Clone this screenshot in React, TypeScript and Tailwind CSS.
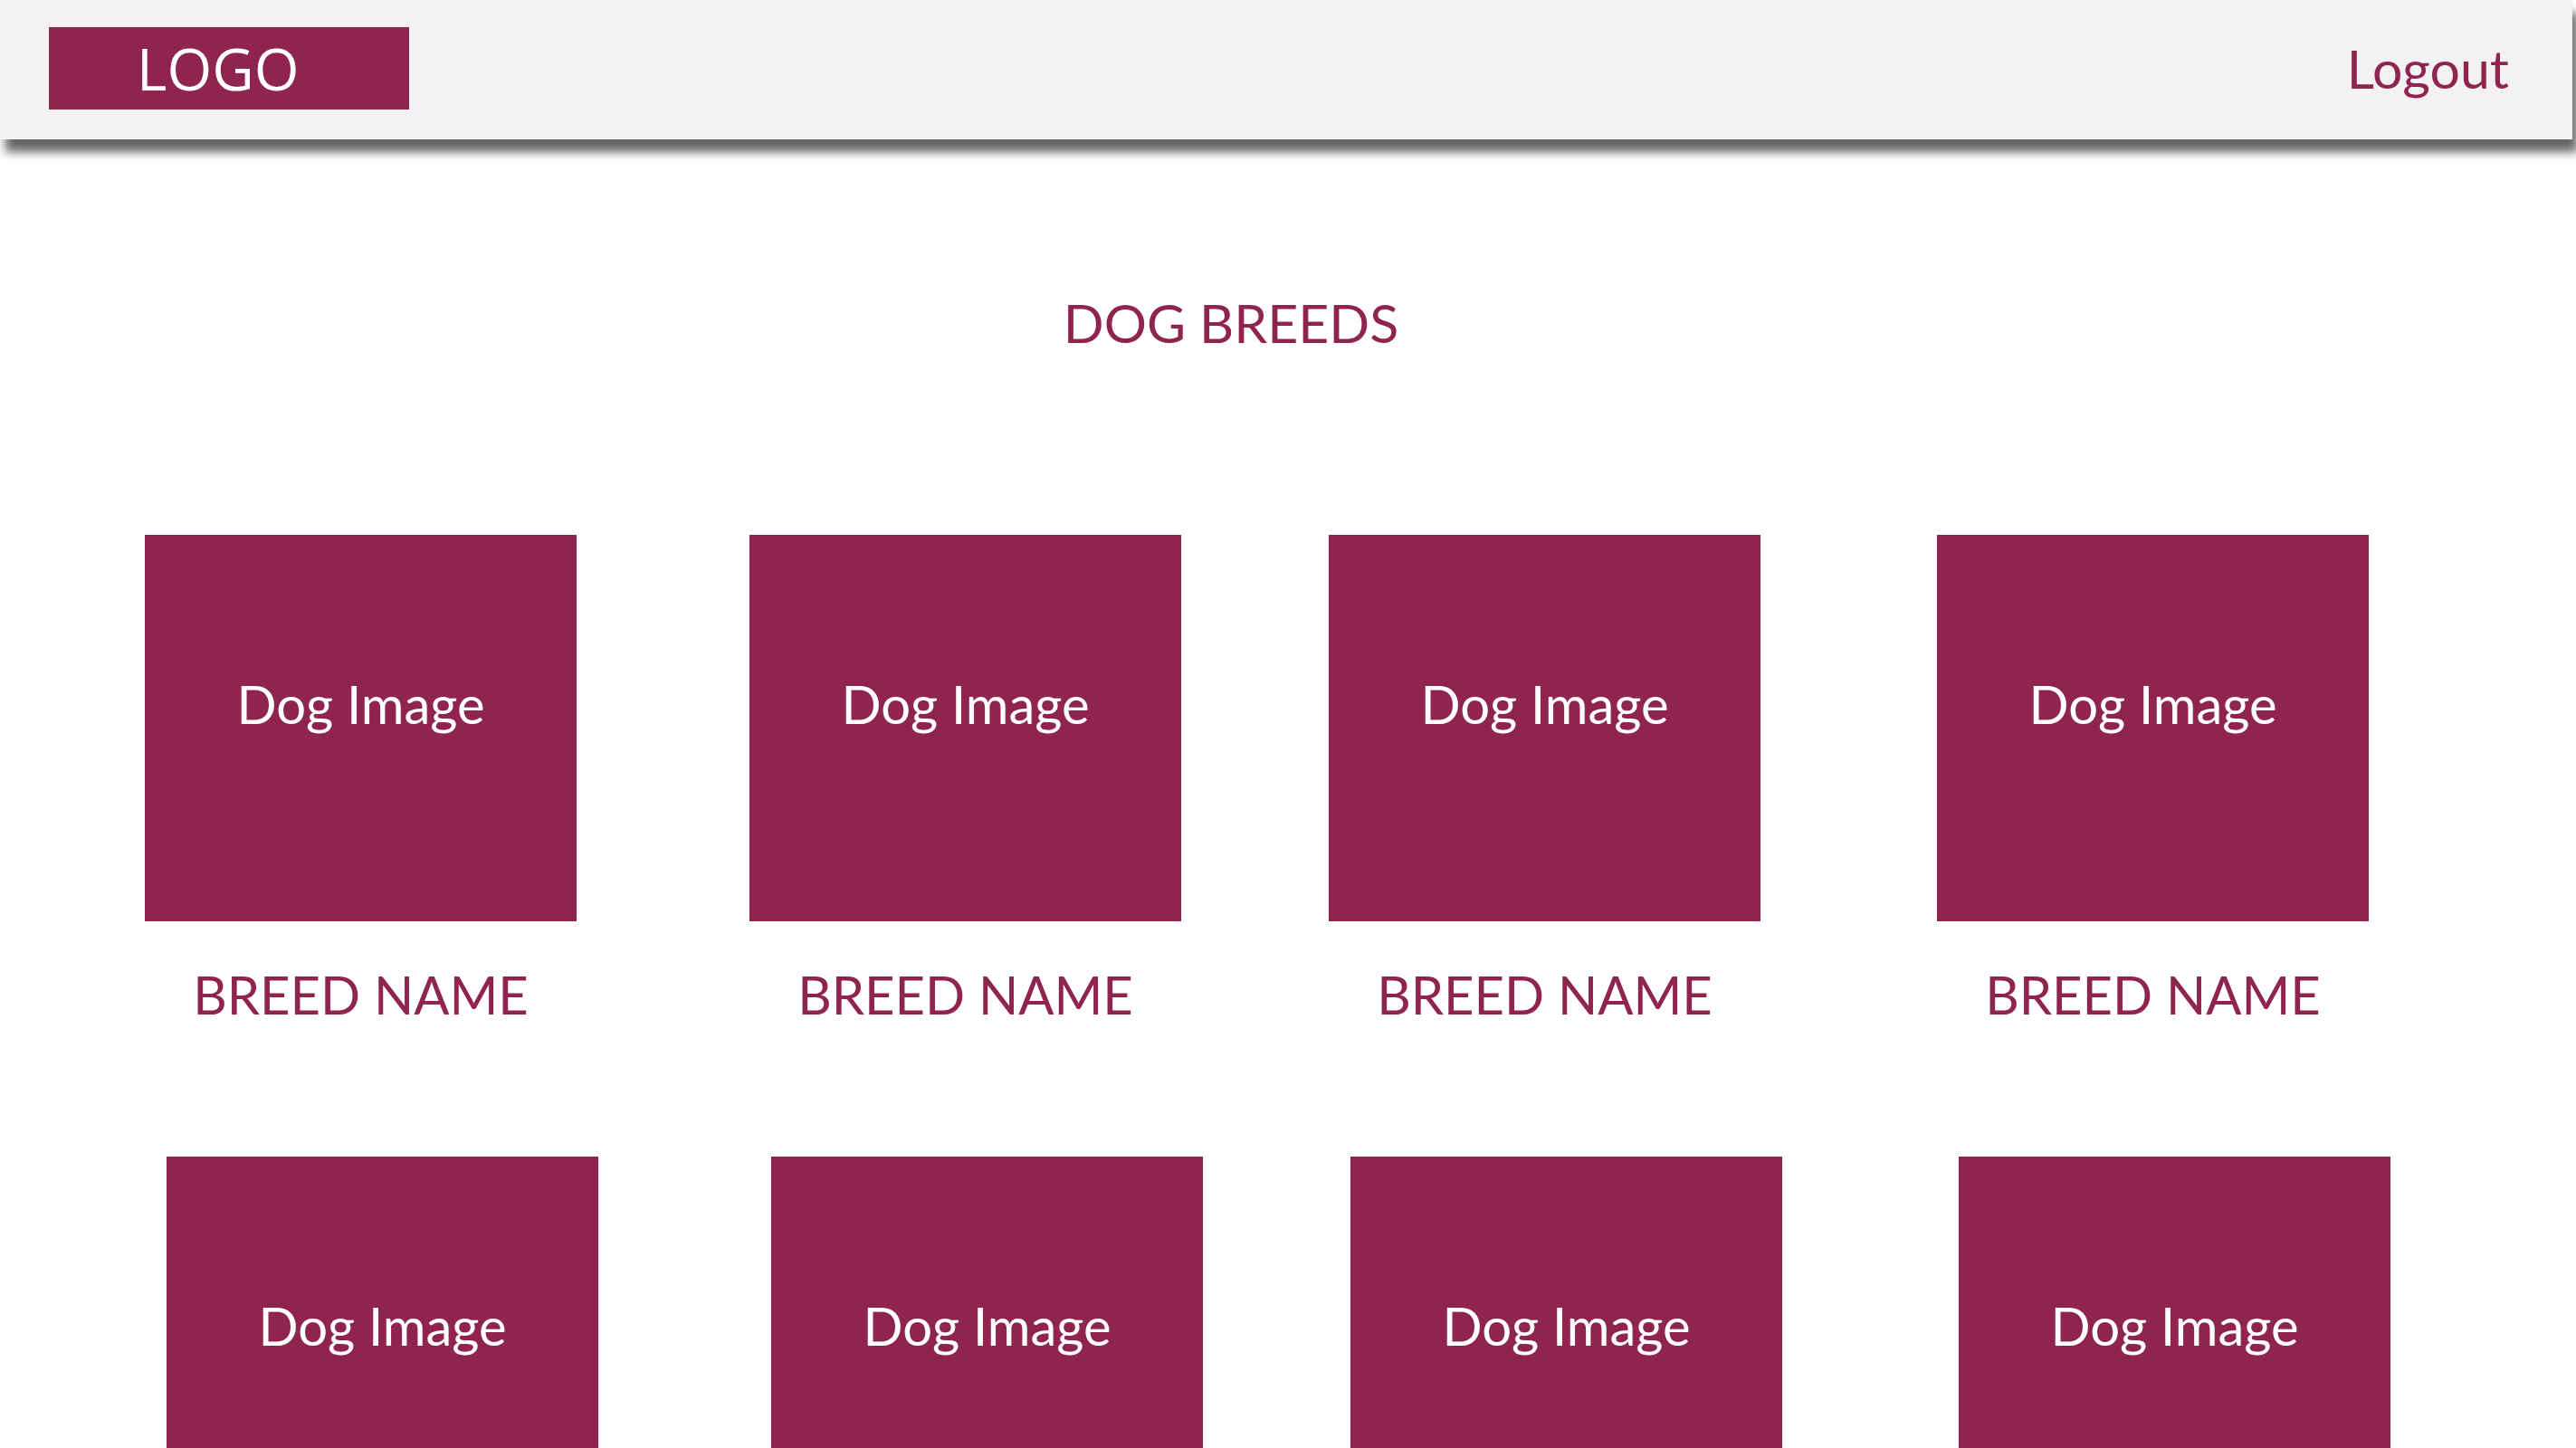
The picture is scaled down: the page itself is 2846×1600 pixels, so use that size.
const breeds = Array.from({ length: 8 }, (_, i) => ({ id: i, name: 'BREED NAME' }))

const colGaps = ['ml-[160px]', 'ml-[191px]', 'ml-[163px]', 'ml-[195px]']
const colGaps2 = ['ml-[184px]', 'ml-[191px]', 'ml-[163px]', 'ml-[195px]']

function BreedCard({ name, gap }: { name: string; gap: string }) {
  return (
    <div className={`${gap} w-[477px] shrink-0 flex flex-col items-center`}>
      <div className="w-full h-[427px] bg-[#8f244e] flex justify-center pt-[158px]">
        <span className="text-white text-[58px] leading-none">Dog Image</span>
      </div>
      <p className="mt-[52px] text-[#8f244e] text-[58px] leading-none">{name}</p>
    </div>
  )
}

export default function App() {
  return (
    <div className="h-[1600px] bg-white overflow-hidden" style={{ fontFamily: "Lato, 'Open Sans', sans-serif" }}>
      <header className="w-[2842px] h-[154px] bg-[#f3f1f2] shadow-[6px_14px_10px_rgba(0,0,0,0.6)] flex items-center justify-between pl-[54px] pr-[70px] pb-[3px] relative z-10">
        <div className="w-[398px] h-[91px] bg-[#8f244e] flex items-center pl-[97px]">
          <span className="text-white text-[64px] leading-none" style={{ fontFamily: "'Open Sans', sans-serif" }}>LOGO</span>
        </div>
        <a href="#" className="text-[#8f244e] text-[59px] leading-none">Logout</a>
      </header>

      <h1 className="mt-[173px] pr-[126px] text-center text-[#8f244e] text-[59px] leading-none">DOG BREEDS</h1>

      <section className="mt-[205px]">
        <div className="flex">
          {breeds.slice(0, 4).map((b, i) => (
            <BreedCard key={b.id} name={b.name} gap={colGaps[i]} />
          ))}
        </div>
        <div className="flex mt-[150px]">
          {breeds.slice(4).map((b, i) => (
            <BreedCard key={b.id} name={b.name} gap={colGaps2[i]} />
          ))}
        </div>
      </section>
    </div>
  )
}
